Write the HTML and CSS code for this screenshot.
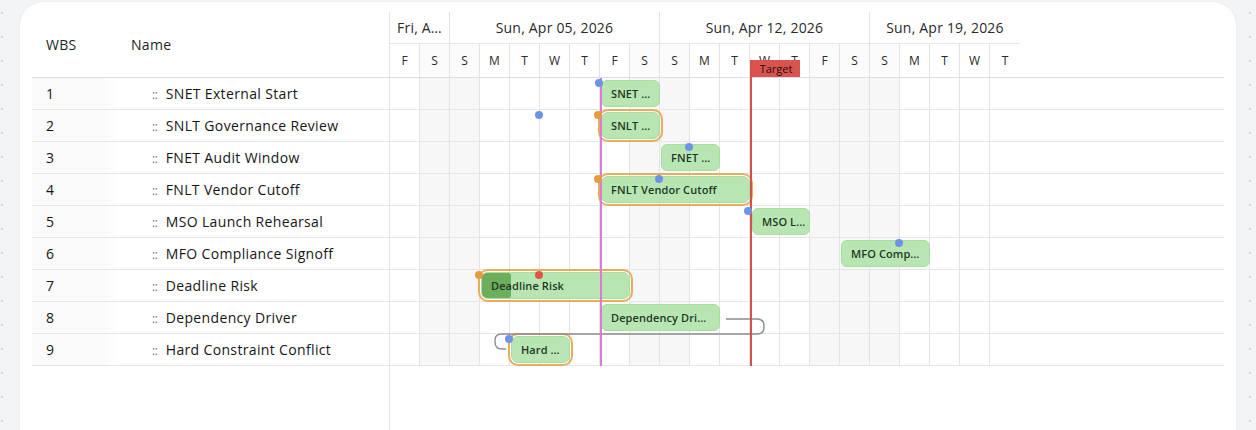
FILE: index.html
```html
<!DOCTYPE html>
<html>
<head>
<meta charset="utf-8">
<link rel="stylesheet" href="styles.css">
</head>
<body>
<div class="card">
  <div class="gantt">
    <div class="grid-left">
      <div class="lhead"><div class="c-wbs">WBS</div><div class="c-name">Name</div></div>
      <div class="lrow"><div class="c-wbs">1</div><div class="c-name"><span class="handle">::</span>SNET External Start</div></div>
      <div class="lrow"><div class="c-wbs">2</div><div class="c-name"><span class="handle">::</span>SNLT Governance Review</div></div>
      <div class="lrow"><div class="c-wbs">3</div><div class="c-name"><span class="handle">::</span>FNET Audit Window</div></div>
      <div class="lrow"><div class="c-wbs">4</div><div class="c-name"><span class="handle">::</span>FNLT Vendor Cutoff</div></div>
      <div class="lrow"><div class="c-wbs">5</div><div class="c-name"><span class="handle">::</span>MSO Launch Rehearsal</div></div>
      <div class="lrow"><div class="c-wbs">6</div><div class="c-name"><span class="handle">::</span>MFO Compliance Signoff</div></div>
      <div class="lrow"><div class="c-wbs">7</div><div class="c-name"><span class="handle">::</span>Deadline Risk</div></div>
      <div class="lrow"><div class="c-wbs">8</div><div class="c-name"><span class="handle">::</span>Dependency Driver</div></div>
      <div class="lrow"><div class="c-wbs">9</div><div class="c-name"><span class="handle">::</span>Hard Constraint Conflict</div></div>
    </div>
    <div class="timeline">
      <div class="thead">
        <div class="weeks">
          <div class="wk w2">Fri, A…</div>
          <div class="wk w7">Sun, Apr 05, 2026</div>
          <div class="wk w7">Sun, Apr 12, 2026</div>
          <div class="wk w5 last">Sun, Apr 19, 2026</div>
        </div>
        <div class="days">
          <div class="d">F</div><div class="d we">S</div><div class="d we">S</div><div class="d">M</div><div class="d">T</div><div class="d">W</div><div class="d">T</div>
          <div class="d">F</div><div class="d we">S</div><div class="d we">S</div><div class="d">M</div><div class="d">T</div><div class="d">W</div><div class="d">T</div>
          <div class="d we">F</div><div class="d we">S</div><div class="d we">S</div><div class="d">M</div><div class="d">T</div><div class="d">W</div><div class="d last">T</div>
        </div>
      </div>
      <div class="tbody">
        <div class="trow">
          <div class="bar" style="left:211px;width:59px">SNET …</div>
          <span class="dot blue" style="left:205px"></span>
        </div>
        <div class="trow">
          <div class="bar flag" style="left:211px;width:59px">SNLT …</div>
          <span class="dot blue" style="left:145px"></span>
          <span class="dot orange" style="left:204px"></span>
        </div>
        <div class="trow">
          <div class="bar" style="left:271px;width:59px">FNET …</div>
          <span class="dot blue" style="left:295px"></span>
        </div>
        <div class="trow">
          <div class="bar flag" style="left:211px;width:149px">FNLT Vendor Cutoff</div>
          <span class="dot orange" style="left:204px"></span>
          <span class="dot blue" style="left:265px"></span>
        </div>
        <div class="trow">
          <div class="bar" style="left:362px;width:58px">MSO L…</div>
          <span class="dot blue" style="left:354px"></span>
        </div>
        <div class="trow">
          <div class="bar" style="left:451px;width:89px">MFO Comp…</div>
          <span class="dot blue" style="left:505px"></span>
        </div>
        <div class="trow">
          <div class="bar flag" style="left:91px;width:149px"><span class="prog" style="width:29px"></span><span class="lbl">Deadline Risk</span></div>
          <span class="dot orange" style="left:85px"></span>
          <span class="dot red" style="left:145px"></span>
        </div>
        <div class="trow">
          <div class="bar" style="left:211px;width:119px">Dependency Dri…</div>
        </div>
        <div class="trow">
          <div class="bar flag" style="left:121px;width:59px">Hard …</div>
          <span class="dot blue" style="left:115px"></span>
        </div>
        <svg class="links" width="834" height="288" viewBox="0 0 834 288">
          <path d="M336 241 H367 Q374 241 374 248 V249 Q374 256 367 256 H112 Q105 256 105 262 V264 Q105 271 112 271 H116" fill="none" stroke="#8c8c8c" stroke-width="1.4"/>
        </svg>
      </div>
      <div class="today"></div>
      <div class="target"><span class="tlabel">Target</span></div>
    </div>
  </div>
</div>
</body>
</html>
```

FILE: styles.css
```css
html, body {
  margin: 0;
  padding: 0;
}
body {
  width: 1256px;
  height: 430px;
  overflow: hidden;
  background-color: #f3f4f6;
  background-image: radial-gradient(circle at 12px 12px, #d3d6dc 1px, transparent 1.6px);
  background-size: 24px 24px;
  background-position: -10px 1px;
  font-family: "Open Sans", "Liberation Sans", sans-serif;
  color: #1f1f1f;
}
.card {
  margin: 2px 20px 0 20px;
  padding: 10px 12px 0 12px;
  height: 470px;
  background: #fff;
  border-radius: 24px;
  box-shadow: 0 1px 4px rgba(0, 0, 0, 0.05);
}
.gantt {
  display: flex;
  height: 100%;
}
.grid-left {
  width: 358px;
  flex: none;
  border-right: 1px solid #e3e3e3;
  box-sizing: border-box;
}
.lhead {
  display: flex;
  align-items: center;
  height: 65px;
  border-bottom: 1px solid #dedede;
  font-size: 14px;
  letter-spacing: 0.3px;
  color: #1f1f1f;
}
.lrow {
  display: flex;
  align-items: center;
  height: 31px;
  border-bottom: 1px solid #e6e6e6;
  font-size: 14px;
  letter-spacing: 0.35px;
  color: #161616;
}
.c-wbs {
  width: 85px;
  height: 100%;
  display: flex;
  align-items: center;
  padding-left: 14px;
  box-sizing: border-box;
  flex: none;
}
.lrow .c-wbs {
  background: linear-gradient(to right, #fafafa 0, #fafafa 70px, #fff 85px);
}
.c-name {
  padding-left: 14px;
  white-space: nowrap;
}
.lrow .c-name {
  padding-left: 35px;
}
.handle {
  color: #707070;
  font-size: 12px;
  margin-right: 8px;
  letter-spacing: -0.3px;
}
.timeline {
  position: relative;
  flex: 1;
}
.thead {
  height: 65px;
  border-bottom: 1px solid #dedede;
}
.weeks {
  display: flex;
  width: 630px;
  height: 32px;
  border-bottom: 1px solid #e6e6e6;
  box-sizing: border-box;
}
.wk {
  display: flex;
  align-items: center;
  justify-content: center;
  font-size: 14px;
  letter-spacing: 0.2px;
  color: #2a2a2a;
  border-right: 1px solid #e3e3e3;
  box-sizing: border-box;
  white-space: nowrap;
}
.wk.last { border-right: none; }
.w2 { width: 60px; }
.w7 { width: 210px; }
.w5 { width: 150px; }
.days {
  display: flex;
  height: 33px;
}
.d {
  width: 30px;
  flex: none;
  display: flex;
  align-items: center;
  justify-content: center;
  font-size: 12px;
  color: #2a2a2a;
  border-right: 1px solid #e3e3e3;
  box-sizing: border-box;
}
.d.we { background: #fbfbfb; }
.d.last { border-right: none; }
.tbody {
  position: relative;
}
.trow {
  position: relative;
  height: 31px;
  border-bottom: 1px solid #e6e6e6;
  background-image:
    repeating-linear-gradient(to right, transparent 0, transparent 29px, #e3e3e3 29px, #e3e3e3 30px),
    linear-gradient(to right, transparent 0, transparent 30px, #f7f7f7 30px, #f7f7f7 90px, transparent 90px, transparent 240px, #f7f7f7 240px, #f7f7f7 300px, transparent 300px, transparent 420px, #f7f7f7 420px, #f7f7f7 510px, transparent 510px);
  background-size: 600px 100%, 630px 100%;
  background-repeat: no-repeat;
}
.bar {
  position: absolute;
  top: 2px;
  height: 27px;
  box-sizing: border-box;
  background: #b8e6b3;
  border: 1px solid #a9dca3;
  border-radius: 6px;
  font-size: 11px;
  font-weight: 600;
  letter-spacing: 0.1px;
  color: #1f381f;
  line-height: 25px;
  padding: 0 9px;
  white-space: nowrap;
  overflow: visible;
  z-index: 1;
}
.bar.flag {
  outline: 2px solid #e8ad5c;
  outline-offset: 1px;
  border-radius: 7px;
}
.prog {
  position: absolute;
  left: 0;
  top: 0;
  bottom: 0;
  background: #6cae5b;
  border-radius: 5px 3px 3px 5px;
}
.lbl {
  position: relative;
}
.dot {
  position: absolute;
  top: 1px;
  width: 8px;
  height: 8px;
  border-radius: 50%;
  z-index: 4;
}
.dot.blue { background: #6f93e6; }
.dot.orange { background: #e79d3f; }
.dot.red { background: #df5448; }
.links {
  position: absolute;
  left: 0;
  top: 0;
  z-index: 2;
  pointer-events: none;
}
.today {
  position: absolute;
  left: 210px;
  top: 66px;
  width: 2px;
  height: 288px;
  background: #dc7ad8;
  z-index: 3;
}
.target {
  position: absolute;
  left: 360px;
  top: 48px;
  height: 306px;
  border-left: 2px solid #d4514b;
  z-index: 3;
}
.tlabel {
  display: block;
  width: 48px;
  height: 17px;
  background: #d9534f;
  color: #2b0b0b;
  font-size: 11px;
  line-height: 17px;
  text-align: center;
  font-weight: 500;
}
```
